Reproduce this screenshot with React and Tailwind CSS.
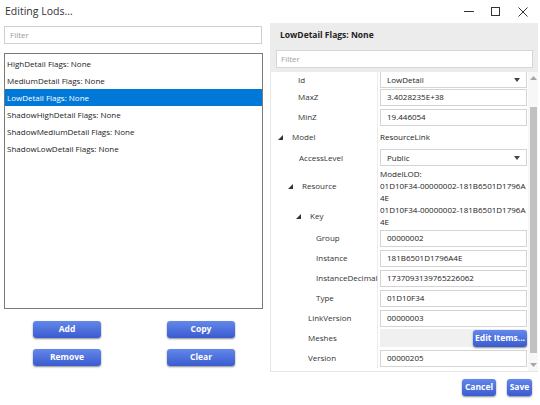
import React from 'react';

const Tri = ({ className = '' }) => (
  <svg width="5" height="5" viewBox="0 0 5 5" className={className}>
    <polygon points="5,0 5,5 0,5" fill="#333" />
  </svg>
);

const BlueButton = ({ label, className = '' }) => (
  <button
    className={`h-[17px] rounded-[3px] bg-gradient-to-b from-[#6487ea] to-[#3a5bd0] text-white text-[8.5px] font-bold shadow-[0_1px_2px_rgba(0,0,0,0.45)] flex items-center justify-center ${className}`}
  >
    {label}
  </button>
);

const TextBox = ({ value, dropdown }) => (
  <div className="h-[17px] w-[147px] border border-[#d4d4d4] bg-white flex items-center pl-[6px] pr-[6px] text-[8px] text-[#222]">
    <span className="flex-1">{value}</span>
    {dropdown && (
      <svg width="6" height="4" viewBox="0 0 6 4">
        <polygon points="0,0 6,0 3,4" fill="#444" />
      </svg>
    )}
  </div>
);

const rows = [
  { label: 'Id', pad: 'pl-[27px]', h: 'h-[15px]', box: 'LowDetail', dropdown: true },
  { label: 'MaxZ', pad: 'pl-[27px]', h: 'h-[20px]', box: '3.4028235E+38' },
  { label: 'MinZ', pad: 'pl-[27px]', h: 'h-[20px]', box: '19.446054' },
  { label: 'Model', pad: 'pl-[7px]', tri: true, h: 'h-[20px]', text: ['ResourceLink'] },
  { label: 'AccessLevel', pad: 'pl-[28px]', h: 'h-[21px]', box: 'Public', dropdown: true },
  { label: 'Resource', pad: 'pl-[17px]', tri: true, h: 'h-[36px]', text: ['ModelLOD:', '01D10F34-00000002-181B6501D1796A', '4E'] },
  { label: 'Key', pad: 'pl-[25px]', tri: true, h: 'h-[24px]', text: ['01D10F34-00000002-181B6501D1796A', '4E'] },
  { label: 'Group', pad: 'pl-[45px]', h: 'h-[20px]', box: '00000002' },
  { label: 'Instance', pad: 'pl-[45px]', h: 'h-[20px]', box: '181B6501D1796A4E' },
  { label: 'InstanceDecimal', pad: 'pl-[45px]', h: 'h-[20px]', box: '1737093139765226062' },
  { label: 'Type', pad: 'pl-[45px]', h: 'h-[20px]', box: '01D10F34' },
  { label: 'LinkVersion', pad: 'pl-[37px]', h: 'h-[20px]', box: '00000003' },
  { label: 'Meshes', pad: 'pl-[37px]', h: 'h-[20px]', edit: true },
  { label: 'Version', pad: 'pl-[37px]', h: 'h-[20px]', box: '00000205' },
];

const lods = [
  'HighDetail Flags: None',
  'MediumDetail Flags: None',
  'LowDetail Flags: None',
  'ShadowHighDetail Flags: None',
  'ShadowMediumDetail Flags: None',
  'ShadowLowDetail Flags: None',
];

export default function App() {
  return (
    <div className="w-[540px] h-[405px] bg-white font-['Open_Sans',sans-serif] text-[#1e1e1e] overflow-hidden flex flex-col">
      {/* Title bar */}
      <div className="h-[23px] flex items-center pl-[5px] shrink-0">
        <span className="text-[10.5px] text-[#333]">Editing Lods...</span>
        <div className="ml-auto flex items-center pr-[4px]">
          <div className="w-[27px] h-[23px] flex items-center justify-center">
            <div className="w-[10px] h-px bg-[#333]"></div>
          </div>
          <div className="w-[27px] h-[23px] flex items-center justify-center">
            <div className="w-[9px] h-[9px] border border-[#333]"></div>
          </div>
          <div className="w-[27px] h-[23px] flex items-center justify-center">
            <svg width="10" height="10" viewBox="0 0 10 10">
              <path d="M0.5 0.5L9.5 9.5M9.5 0.5L0.5 9.5" stroke="#333" strokeWidth="1" />
            </svg>
          </div>
        </div>
      </div>

      <div className="flex flex-1">
        {/* Left side */}
        <div className="w-[270px] pl-[4px] flex flex-col">
          <div className="mt-[3px] h-[18px] w-[258px] border border-[#cfcfcf] flex items-center pl-[5px] text-[8px] text-[#9a9a9a]">
            Filter
          </div>
          <div className="mt-[9px] h-[256px] w-[259px] border border-[#7a7a7a] pt-[1px]">
            {lods.map((name) => (
              <div
                key={name}
                className={`h-[17px] flex items-center pl-[2px] text-[8px] ${
                  name.startsWith('LowDetail') ? 'bg-[#0078d7] text-white' : 'text-[#222]'
                }`}
              >
                {name}
              </div>
            ))}
          </div>
          <div className="mt-[12px] pl-[29px] flex gap-[66px]">
            <BlueButton label="Add" className="w-[68px]" />
            <BlueButton label="Copy" className="w-[68px]" />
          </div>
          <div className="mt-[11px] pl-[29px] flex gap-[66px]">
            <BlueButton label="Remove" className="w-[68px]" />
            <BlueButton label="Clear" className="w-[68px]" />
          </div>
        </div>

        {/* Right side */}
        <div className="w-[268px] flex flex-col">
          <div className="bg-[#ececec] h-[49px] flex flex-col">
            <div className="h-[24px] flex items-center pl-[10px] text-[8.5px] font-bold text-[#222]">
              LowDetail Flags: None
            </div>
            <div className="mt-[3px] ml-[6px] h-[18px] w-[257px] bg-white border border-[#d6d6d6] flex items-center pl-[4px] text-[8px] text-[#a0a0a0]">
              Filter
            </div>
          </div>

          <div className="h-[300px] flex border-l border-b border-[#e6e6e6]">
            <div className="w-[257px] flex flex-col overflow-hidden">
              {rows.map((r) => (
                <div key={r.label} className={`${r.h} flex shrink-0`}>
                  <div className={`w-[107px] border-r border-[#ececec] flex items-center ${r.pad} text-[8px] text-[#333]`}>
                    {r.tri && <Tri className="mr-[9px] shrink-0" />}
                    <span>{r.label}</span>
                  </div>
                  <div className="flex-1 pl-[2px] flex items-center">
                    {r.box && <TextBox value={r.box} dropdown={r.dropdown} />}
                    {r.text && (
                      <div className="text-[8px] leading-[12px] text-[#222] whitespace-nowrap">
                        {r.text.map((t) => (
                          <div key={t}>{t}</div>
                        ))}
                      </div>
                    )}
                    {r.edit && (
                      <div className="h-[18px] w-[147px] bg-[#f0f0f0] flex items-center justify-end">
                        <BlueButton label="Edit Items..." className="w-[54px] h-[16px]" />
                      </div>
                    )}
                  </div>
                </div>
              ))}
            </div>
            {/* Scrollbar */}
            <div className="w-[10px] bg-[#f7f7f7] flex flex-col items-center">
              <div className="h-[12px] flex items-center">
                <svg width="7" height="4" viewBox="0 0 7 4">
                  <polygon points="0,4 7,4 3.5,0" fill="#a6a6a6" />
                </svg>
              </div>
              <div className="mt-[23px] w-[7px] h-[246px] bg-[#c1c1c1]"></div>
              <div className="mt-auto h-[12px] flex items-center">
                <svg width="7" height="4" viewBox="0 0 7 4">
                  <polygon points="0,0 7,0 3.5,4" fill="#a6a6a6" />
                </svg>
              </div>
            </div>
          </div>

          <div className="mt-[7px] flex justify-end pr-[6px] gap-[11px]">
            <BlueButton label="Cancel" className="w-[34px]" />
            <BlueButton label="Save" className="w-[25px]" />
          </div>
        </div>
      </div>
    </div>
  );
}
